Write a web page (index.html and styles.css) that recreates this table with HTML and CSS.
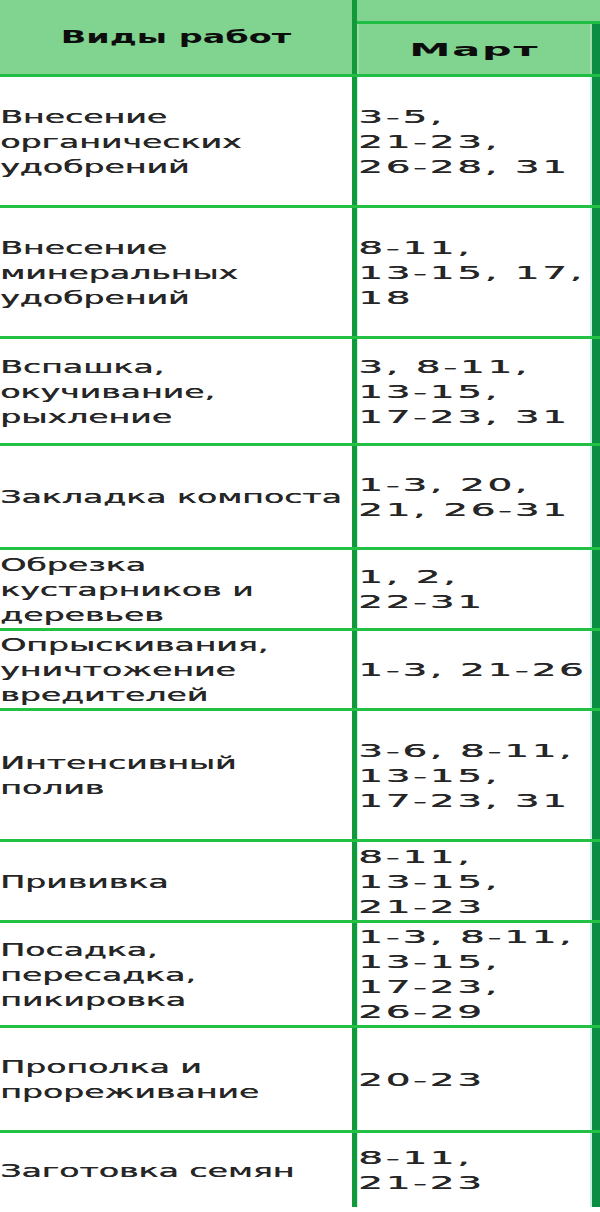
FILE: index.html
```html
<!DOCTYPE html>
<html lang="ru">
<head>
<meta charset="utf-8">
<title>Виды работ — Март</title>
<link rel="stylesheet" href="styles.css">
</head>
<body>
<div class="sheet">
  <div class="head">
    <div class="head-work"><span class="hd hd-work">Виды работ</span></div>
    <div class="head-month">
      <div class="head-strip"></div>
      <div class="head-cell"><span class="hd hd-month">Март</span></div>
    </div>
  </div>

  <div class="row r-xl">
    <div class="work"><span class="txt">Внесение<br>органических<br>удобрений</span></div>
    <div class="dates"><span class="num">3-5,<br>21-23,<br>26-28, 31</span></div>
  </div>
  <div class="row r-xl">
    <div class="work"><span class="txt">Внесение<br>минеральных<br>удобрений</span></div>
    <div class="dates"><span class="num">8-11,<br>13-15, 17,<br>18</span></div>
  </div>
  <div class="row r-l2">
    <div class="work"><span class="txt">Вспашка,<br>окучивание,<br>рыхление</span></div>
    <div class="dates"><span class="num">3, 8-11,<br>13-15,<br>17-23, 31</span></div>
  </div>
  <div class="row r-l1">
    <div class="work"><span class="txt">Закладка компоста</span></div>
    <div class="dates"><span class="num">1-3, 20,<br>21, 26-31</span></div>
  </div>
  <div class="row r-m">
    <div class="work"><span class="txt">Обрезка<br>кустарников и<br>деревьев</span></div>
    <div class="dates"><span class="num">1, 2,<br>22-31</span></div>
  </div>
  <div class="row r-m1">
    <div class="work"><span class="txt">Опрыскивания,<br>уничтожение<br>вредителей</span></div>
    <div class="dates"><span class="num">1-3, 21-26</span></div>
  </div>
  <div class="row r-xl">
    <div class="work"><span class="txt">Интенсивный<br>полив</span></div>
    <div class="dates"><span class="num">3-6, 8-11,<br>13-15,<br>17-23, 31</span></div>
  </div>
  <div class="row r-m">
    <div class="work"><span class="txt">Прививка</span></div>
    <div class="dates"><span class="num">8-11,<br>13-15,<br>21-23</span></div>
  </div>
  <div class="row r-l">
    <div class="work"><span class="txt">Посадка,<br>пересадка,<br>пикировка</span></div>
    <div class="dates"><span class="num">1-3, 8-11,<br>13-15,<br>17-23,<br>26-29</span></div>
  </div>
  <div class="row r-l">
    <div class="work"><span class="txt">Прополка и<br>прореживание</span></div>
    <div class="dates"><span class="num">20-23</span></div>
  </div>
  <div class="row r-s last">
    <div class="work"><span class="txt">Заготовка семян</span></div>
    <div class="dates"><span class="num">8-11,<br>21-23</span></div>
  </div>
</div>
</body>
</html>
```

FILE: styles.css
```css
html, body {
  margin: 0;
  padding: 0;
  background: #ffffff;
}

body {
  font-family: "DejaVu Sans", "Noto Sans", sans-serif;
  font-size: 18px;
  line-height: 25px;
  color: #262626;
}

.sheet {
  width: 600px;
  overflow: hidden;
}

/* ---------- header ---------- */
.head {
  display: flex;
  height: 74px;
  background: #80d48f;
  border-bottom: 3px solid #1fbd43;
}

.head-work {
  width: 352px;
  display: flex;
  align-items: center;
  justify-content: center;
  padding-bottom: 1px;
  box-sizing: border-box;
}

.head-month {
  flex: 1;
  display: flex;
  flex-direction: column;
  border-left: 5px solid #11993a;
}

.head-strip {
  height: 21px;
  border-bottom: 3px solid #1fbd43;
}

.head-cell {
  flex: 1;
  display: flex;
  align-items: center;
  justify-content: center;
  border-right: 8px solid #0c8d44;
  box-shadow: inset 4px 2px 0 -2px #9fdcaa, inset -4px -2px 0 -2px #9fdcaa;
}

.hd {
  display: inline-block;
  font-weight: bold;
  color: #0d0d0d;
  white-space: nowrap;
  transform-origin: center center;
}

.hd-work {
  transform: scaleX(1.86);
}

.hd-month {
  letter-spacing: 0.8px;
  transform: scaleX(2.3);
}

/* ---------- body rows ---------- */
.row {
  display: flex;
  border-bottom: 3px solid #22c144;
}

.row.last {
  border-bottom: none;
}

.r-xl { height: 128px; }
.r-l2 { height: 104px; }
.r-l  { height: 102px; }
.r-l1 { height: 101px; }
.r-m  { height: 78px; }
.r-m1 { height: 77px; }
.r-s  { height: 74px; }

.work {
  width: 352px;
  display: flex;
  align-items: center;
}

.dates {
  flex: 1;
  display: flex;
  align-items: center;
  border-left: 5px solid #11993a;
  border-right: 8px solid #0c8d44;
  box-shadow: inset 1px 0 0 #c4f2e6, inset -2px 0 0 #c4f2e6;
  padding-left: 1px;
}

.txt,
.num {
  display: block;
  white-space: nowrap;
  transform-origin: left center;
  text-shadow: 0.35px 0 0 #262626;
}

.txt {
  transform: scaleX(1.84);
}

.num {
  letter-spacing: 1.3px;
  transform: scaleX(2.15);
}
```
